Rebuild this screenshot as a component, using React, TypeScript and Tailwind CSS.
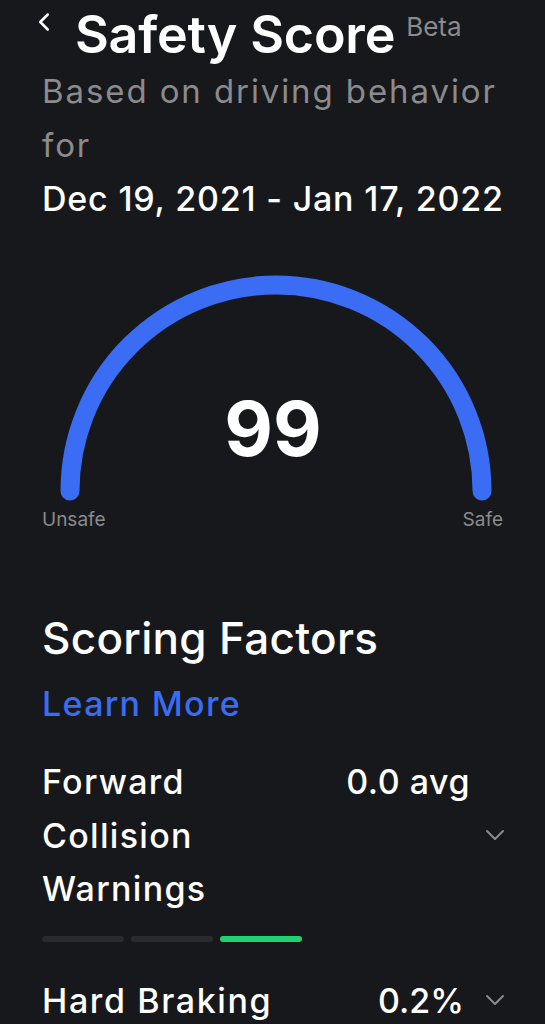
import { ChevronDown, ChevronLeft } from "lucide-react";

const font = { fontFamily: "Inter, 'Noto Sans', sans-serif" };

function Gauge() {
  // half circle from Unsafe (left) to Safe (right), score 99 fills it all
  return (
    <svg width="461" height="237" viewBox="0 0 461 237" className="block">
      <path
        d="M28 220 A206 206 0 0 1 440 220"
        fill="none"
        stroke="#3a6cf4"
        strokeWidth="19"
        strokeLinecap="round"
      />
      <text
        x="231"
        y="185"
        textAnchor="middle"
        fill="#ffffff"
        fontFamily="Inter, 'Noto Sans', sans-serif"
        fontSize="75"
        fontWeight="700"
      >
        99
      </text>
    </svg>
  );
}

function SegmentBar({ level }: { level: number }) {
  return (
    <div className="mt-[20px] flex gap-[7px]">
      {[0, 1, 2].map((i) => (
        <div
          key={i}
          className={
            i === level
              ? "h-[6px] w-[82px] rounded-full bg-[#21d16f]"
              : "h-[6px] w-[82px] rounded-full bg-[#2a2b2f]"
          }
        />
      ))}
    </div>
  );
}

export default function App() {
  return (
    <div
      className="h-[1024px] w-full overflow-hidden bg-[#17181b] px-[42px] text-white"
      style={font}
    >
      <div className="flex items-start pt-[5px]">
        <ChevronLeft
          size={30}
          strokeWidth={2}
          className="mt-[2px] -ml-[13px] shrink-0 text-white"
        />
        <h1 className="ml-[16px] text-[52px] font-semibold leading-[59px] tracking-[-0.2px]">
          Safety Score
        </h1>
        <span className="ml-[11px] mt-[7px] text-[26px] leading-[30px] text-[#8b8b8d]">
          Beta
        </span>
      </div>

      <p className="whitespace-nowrap text-[33px] leading-[54px] tracking-[1.9px] text-[#8b8b8d]">
        Based on driving behavior
        <br />
        for
      </p>
      <p className="whitespace-nowrap text-[34px] font-medium leading-[54px] tracking-[0.8px]">
        Dec 19, 2021 - Jan 17, 2022
      </p>

      <div className="mt-[45px]">
        <Gauge />
        <div className="flex justify-between text-[19px] leading-[24px] text-[#8b8b8d]">
          <span>Unsafe</span>
          <span>Safe</span>
        </div>
      </div>

      <h2 className="mt-[80px] text-[44px] font-medium leading-[52px] tracking-[0.3px]">
        Scoring Factors
      </h2>
      <p className="mt-[13px] text-[34px] font-medium leading-[54px] tracking-[1.3px] text-[#3a6cf4]">
        Learn More
      </p>

      <div className="mt-[24px]">
        <div className="flex items-start">
          <p className="flex-1 text-[34px] font-medium leading-[53.5px] tracking-[1.3px]">
            Forward
            <br />
            Collision
            <br />
            Warnings
          </p>
          <span className="mr-[9px] text-[34px] font-medium leading-[53.5px] tracking-[0.5px]">
            0.0 avg
          </span>
          <ChevronDown
            size={32}
            strokeWidth={1.5}
            className="-mr-[8px] shrink-0 self-center text-[#8b8b8d]"
          />
        </div>
        <SegmentBar level={2} />
      </div>

      <div className="mt-[32px] flex items-start">
        <p className="flex-1 text-[34px] font-medium leading-[53.5px] tracking-[1.6px]">
          Hard Braking
        </p>
        <span className="mr-[15px] text-[34px] font-medium leading-[53.5px]">
          0.2%
        </span>
        <ChevronDown
          size={32}
          strokeWidth={1.5}
          className="-mr-[8px] shrink-0 self-center text-[#8b8b8d]"
        />
      </div>
    </div>
  );
}
